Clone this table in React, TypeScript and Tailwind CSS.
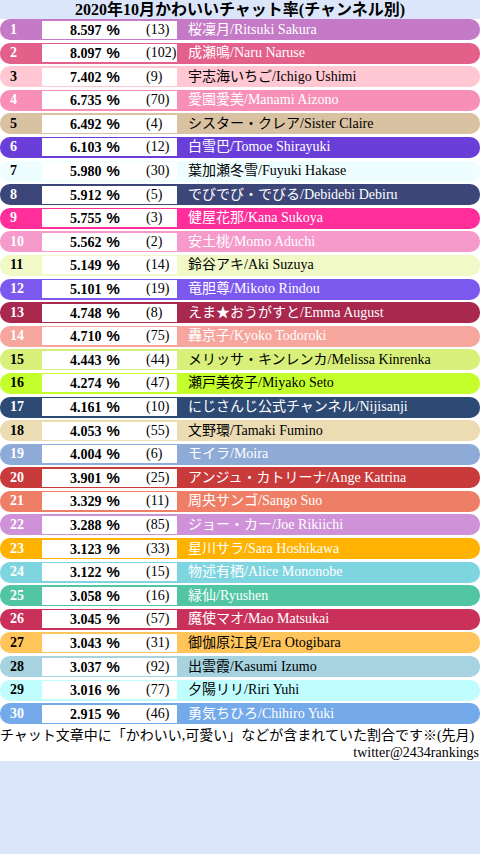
export default function App() {
	const rows = [
		{ rank: 1, pct: "8.597", count: 13, name: "桜凜月/Ritsuki Sakura", bar: "bg-[#c47ac6]", text: "text-white" },
		{ rank: 2, pct: "8.097", count: 102, name: "成瀬鳴/Naru Naruse", bar: "bg-[#e2608a]", text: "text-white" },
		{ rank: 3, pct: "7.402", count: 9, name: "宇志海いちご/Ichigo Ushimi", bar: "bg-[#ffc8d2]", text: "text-black" },
		{ rank: 4, pct: "6.735", count: 70, name: "愛園愛美/Manami Aizono", bar: "bg-[#f78fb6]", text: "text-white" },
		{ rank: 5, pct: "6.492", count: 4, name: "シスター・クレア/Sister Claire", bar: "bg-[#d9c2a1]", text: "text-black" },
		{ rank: 6, pct: "6.103", count: 12, name: "白雪巴/Tomoe Shirayuki", bar: "bg-[#6a3fd9]", text: "text-white" },
		{ rank: 7, pct: "5.980", count: 30, name: "葉加瀬冬雪/Fuyuki Hakase", bar: "bg-[#eefeff]", text: "text-black" },
		{ rank: 8, pct: "5.912", count: 5, name: "でびでび・でびる/Debidebi Debiru", bar: "bg-[#3c4679]", text: "text-white" },
		{ rank: 9, pct: "5.755", count: 3, name: "健屋花那/Kana Sukoya", bar: "bg-[#ff2e9a]", text: "text-white" },
		{ rank: 10, pct: "5.562", count: 2, name: "安土桃/Momo Aduchi", bar: "bg-[#f59acb]", text: "text-white" },
		{ rank: 11, pct: "5.149", count: 14, name: "鈴谷アキ/Aki Suzuya", bar: "bg-[#f1f9c6]", text: "text-black" },
		{ rank: 12, pct: "5.101", count: 19, name: "竜胆尊/Mikoto Rindou", bar: "bg-[#7b59ef]", text: "text-white" },
		{ rank: 13, pct: "4.748", count: 8, name: "えま★おうがすと/Emma August", bar: "bg-[#a8284e]", text: "text-white" },
		{ rank: 14, pct: "4.710", count: 75, name: "轟京子/Kyoko Todoroki", bar: "bg-[#f6a69d]", text: "text-white" },
		{ rank: 15, pct: "4.443", count: 44, name: "メリッサ・キンレンカ/Melissa Kinrenka", bar: "bg-[#d8f07a]", text: "text-black" },
		{ rank: 16, pct: "4.274", count: 47, name: "瀬戸美夜子/Miyako Seto", bar: "bg-[#c4ff2c]", text: "text-black" },
		{ rank: 17, pct: "4.161", count: 10, name: "にじさんじ公式チャンネル/Nijisanji", bar: "bg-[#2d4a74]", text: "text-white" },
		{ rank: 18, pct: "4.053", count: 55, name: "文野環/Tamaki Fumino", bar: "bg-[#ecdcb4]", text: "text-black" },
		{ rank: 19, pct: "4.004", count: 6, name: "モイラ/Moira", bar: "bg-[#8eaad6]", text: "text-white" },
		{ rank: 20, pct: "3.901", count: 25, name: "アンジュ・カトリーナ/Ange Katrina", bar: "bg-[#c93a3a]", text: "text-white" },
		{ rank: 21, pct: "3.329", count: 11, name: "周央サンゴ/Sango Suo", bar: "bg-[#ee7f66]", text: "text-white" },
		{ rank: 22, pct: "3.288", count: 85, name: "ジョー・カー/Joe Rikiichi", bar: "bg-[#cf92d8]", text: "text-white" },
		{ rank: 23, pct: "3.123", count: 33, name: "星川サラ/Sara Hoshikawa", bar: "bg-[#ffb300]", text: "text-white" },
		{ rank: 24, pct: "3.122", count: 15, name: "物述有栖/Alice Mononobe", bar: "bg-[#7fd5df]", text: "text-white" },
		{ rank: 25, pct: "3.058", count: 16, name: "緑仙/Ryushen", bar: "bg-[#52c6a3]", text: "text-white" },
		{ rank: 26, pct: "3.045", count: 57, name: "魔使マオ/Mao Matsukai", bar: "bg-[#c9305a]", text: "text-white" },
		{ rank: 27, pct: "3.043", count: 31, name: "御伽原江良/Era Otogibara", bar: "bg-[#ffc45a]", text: "text-black" },
		{ rank: 28, pct: "3.037", count: 92, name: "出雲霞/Kasumi Izumo", bar: "bg-[#a6d3df]", text: "text-black" },
		{ rank: 29, pct: "3.016", count: 77, name: "夕陽リリ/Riri Yuhi", bar: "bg-[#c0fdff]", text: "text-black" },
		{ rank: 30, pct: "2.915", count: 46, name: "勇気ちひろ/Chihiro Yuki", bar: "bg-[#74a9ea]", text: "text-white" },
	];

	return (
		<div className="min-h-[854px] w-[480px] bg-[#dce6fa] font-['Liberation_Serif','Noto_Sans_CJK_JP',serif] text-black">
			<h1 className="h-[19px] text-center text-[16px] font-bold leading-[19px]">
				2020年10月かわいいチャット率(チャンネル別)
			</h1>

			<div className="bg-white">
				<div className="flex flex-col gap-[2.6px]">
					{rows.map((row) => (
						<div
							key={row.rank}
							className={`flex h-[21px] items-center rounded-[10px] ${row.bar} ${row.text}`}
						>
							<span className="w-[42px] pl-[10px] text-[14px] font-bold leading-none">
								{row.rank}
							</span>
							<div className="flex h-[18px] w-[135px] items-center bg-white pl-[28px] text-[14px] leading-none text-black">
								<span className="w-[76px] font-bold">
									{row.pct}
									<span className="ml-[5px] font-['Liberation_Sans',sans-serif] text-[15px]">%</span>
								</span>
								<span>({row.count})</span>
							</div>
							<span className="pl-[11px] text-[14px] leading-none whitespace-nowrap">
								{row.name}
							</span>
						</div>
					))}
				</div>

				<div className="pt-[3px] text-[14px] leading-[17px]">
					<p className="whitespace-nowrap">
						チャット文章中に「かわいい,可愛い」などが含まれていた割合です※(先月)
					</p>
					<p className="pr-[1px] text-right">twitter@2434rankings</p>
				</div>
			</div>
		</div>
	);
}
